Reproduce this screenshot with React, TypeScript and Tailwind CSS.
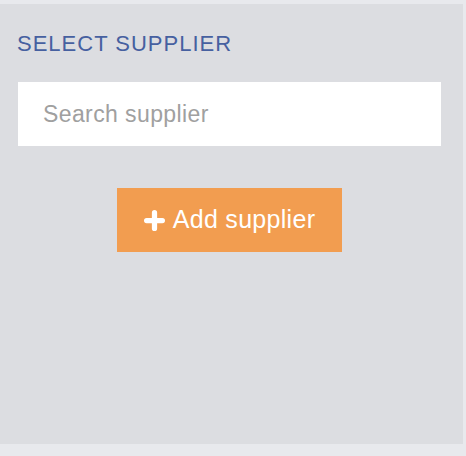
import React, { useState } from 'react';

const PlusIcon: React.FC = () => (
  <svg width="21" height="21" viewBox="0 0 20 20" className="shrink-0">
    <path d="M10 2.5v15M2.5 10h15" stroke="#fff" strokeWidth="5" strokeLinecap="round" />
  </svg>
);

const App: React.FC = () => {
  const [search, setSearch] = useState('');

  return (
    <div className="w-[466px] h-[456px] bg-[#e8e9ed] pt-[4px] font-['Liberation_Sans',Arial,sans-serif]">
      <div className="w-[463px] h-[440px] bg-[#dcdde1] pl-[18px] pr-[22px] pt-[28px]">
        {/* Title */}
        <div className="text-[22px] leading-[24px] tracking-[1px] text-[#4660a0] -ml-[1px]">
          SELECT SUPPLIER
        </div>
        {/* Search */}
        <input
          value={search}
          onChange={e => setSearch(e.target.value)}
          placeholder="Search supplier"
          className="mt-[26px] w-full h-[64px] bg-white px-[25px] text-[23px] tracking-[0.4px] text-[#333] placeholder:text-[#a0a0a0] outline-none"
        />
        {/* Add */}
        <div className="flex justify-center mt-[42px]">
          <button className="w-[225px] h-[64px] bg-[#f29d50] text-white text-[25px] tracking-[0.3px] flex items-center justify-center gap-[8px]">
            <PlusIcon />
            <span>Add supplier</span>
          </button>
        </div>
      </div>
    </div>
  );
};

export default App;
